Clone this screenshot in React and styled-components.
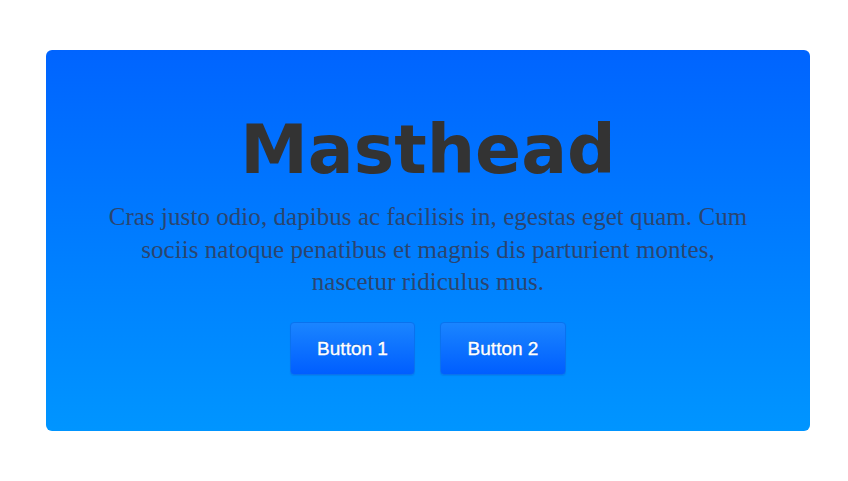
import React from 'react';
import styled, { createGlobalStyle } from 'styled-components';

const GlobalStyle = createGlobalStyle`
  html, body {
    margin: 0;
    padding: 0;
    background: #fff;
  }
`;

const Page = styled.div`
  width: 848px;
  height: 481px;
  box-sizing: border-box;
  padding: 50px 38px 0 46px;
`;

const Masthead = styled.header`
  width: 764px;
  height: 381px;
  box-sizing: border-box;
  border-radius: 6px;
  background: linear-gradient(to bottom, #0064ff 0%, #0095ff 100%);
  display: flex;
  flex-direction: column;
  align-items: center;
  padding-top: 58px;
  text-align: center;
`;

const Title = styled.h1`
  margin: 0;
  font-family: 'DejaVu Sans', Verdana, sans-serif;
  font-weight: bold;
  font-size: 68px;
  line-height: 84px;
  color: #333;
`;

const Lead = styled.p`
  margin: 9px 0 0;
  width: 660px;
  font-family: 'Liberation Serif', 'Times New Roman', serif;
  font-size: 25px;
  letter-spacing: 0.05px;
  line-height: 32.5px;
  color: #2b4570;
`;

const Actions = styled.div`
  display: flex;
  gap: 25px;
  margin-top: 23px;
`;

const Button = styled.button`
  width: ${p => p.$w}px;
  height: 53px;
  box-sizing: border-box;
  border: 1px solid #0a72ee;
  border-radius: 4px;
  background: linear-gradient(to bottom, #1a85ff 0%, #005eff 100%);
  color: #fff;
  font-family: 'Liberation Sans', Helvetica, Arial, sans-serif;
  font-size: 19px;
  -webkit-text-stroke: 0.35px #fff;
  text-shadow: 0 -1px 0 rgba(0, 0, 0, 0.25);
  box-shadow: 0 1px 1px rgba(0, 60, 160, 0.15);
  cursor: pointer;
  padding: 1px 0 0;
`;

export default function App() {
  return (
    <Page>
      <GlobalStyle />
      <Masthead>
        <Title>Masthead</Title>
        <Lead>
          Cras justo odio, dapibus ac facilisis in, egestas eget quam. Cum sociis natoque penatibus et magnis dis parturient montes, nascetur ridiculus mus.
        </Lead>
        <Actions>
          <Button $w={125}>Button 1</Button>
          <Button $w={126}>Button 2</Button>
        </Actions>
      </Masthead>
    </Page>
  );
}
